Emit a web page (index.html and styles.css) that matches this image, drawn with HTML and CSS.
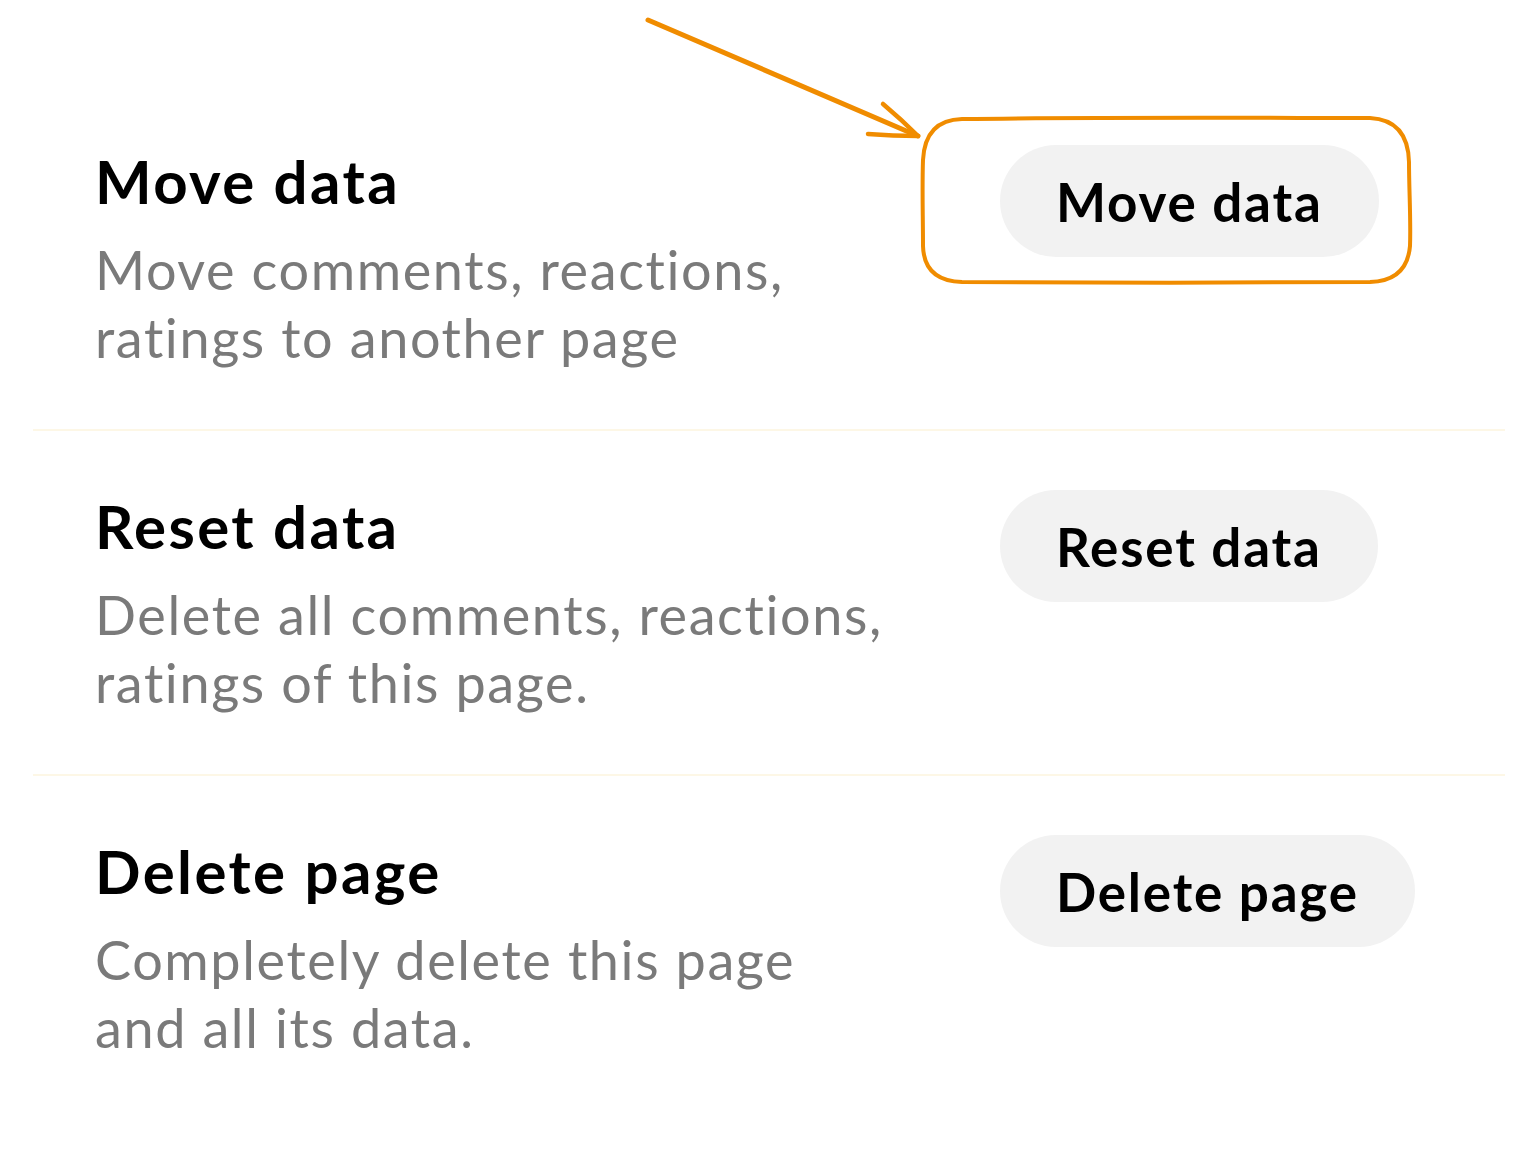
FILE: index.html
```html
<!DOCTYPE html>
<html lang="en">
<head>
<meta charset="utf-8">
<title>Page settings</title>
<link rel="stylesheet" href="styles.css">
</head>
<body>
<main class="page">
  <section class="list">
    <div class="row">
      <div class="text">
        <h2 class="title">Move data</h2>
        <p class="desc">Move comments, reactions, ratings to another page</p>
      </div>
      <button class="btn">Move data</button>
    </div>
    <div class="row">
      <div class="text">
        <h2 class="title">Reset data</h2>
        <p class="desc">Delete all comments, reactions, ratings of this page.</p>
      </div>
      <button class="btn">Reset data</button>
    </div>
    <div class="row last">
      <div class="text">
        <h2 class="title">Delete page</h2>
        <p class="desc">Completely delete this page and all its data.</p>
      </div>
      <button class="btn">Delete page</button>
    </div>
  </section>
  <svg class="annot" width="1525" height="1172" viewBox="0 0 1525 1172" aria-hidden="true">
    <path d="M648 20 L918 136" fill="none" stroke="#f08c00" stroke-width="5" stroke-linecap="round"/>
    <path d="M883 104 Q902 120 918 136 Q893 136 868 134" fill="none" stroke="#f08c00" stroke-width="4.5" stroke-linecap="round" stroke-linejoin="round"/>
    <path d="M962 119 C1100 117 1280 118 1370 118 Q1408 120 1409 162 C1409 190 1411 220 1410 246 Q1407 281 1370 282 C1250 283 1080 283 962 282 Q924 281 923 246 C923 215 922 190 923 160 Q925 120 962 119 Z" fill="none" stroke="#f08c00" stroke-width="4"/>
  </svg>
</main>
</body>
</html>
```

FILE: styles.css
```css
html, body {
  margin: 0;
  padding: 0;
  background: #ffffff;
}

body {
  font-family: "Lato", "Noto Sans", sans-serif;
  color: #000;
}

.page {
  position: relative;
  width: 1525px;
  height: 1172px;
  overflow: hidden;
}

.list {
  margin: 86px 20px 0 33px;
}

.row {
  display: grid;
  grid-template-columns: 905px auto;
  align-items: start;
  height: 343px;
  padding-left: 62px;
  border-bottom: 2px solid #fdf7e6;
}

.row.last {
  border-bottom: none;
}

.text {
  padding-top: 60px;
  max-width: 796px;
}

.title {
  margin: 0;
  font-size: 60px;
  line-height: 70px;
  font-weight: 700;
  letter-spacing: 2.4px;
  color: #000;
}

.desc {
  margin: 20px 0 0;
  font-size: 54px;
  line-height: 68px;
  font-weight: 400;
  letter-spacing: 1.6px;
  color: #7a7a7a;
}

.btn {
  justify-self: start;
  margin-top: 59px;
  height: 112px;
  padding: 0 56px;
  border: none;
  border-radius: 56px;
  background: #f2f2f2;
  font-family: inherit;
  font-size: 53px;
  font-weight: 700;
  letter-spacing: 1.8px;
  color: #000;
}

.annot {
  position: absolute;
  left: 0;
  top: 0;
  pointer-events: none;
}
```
